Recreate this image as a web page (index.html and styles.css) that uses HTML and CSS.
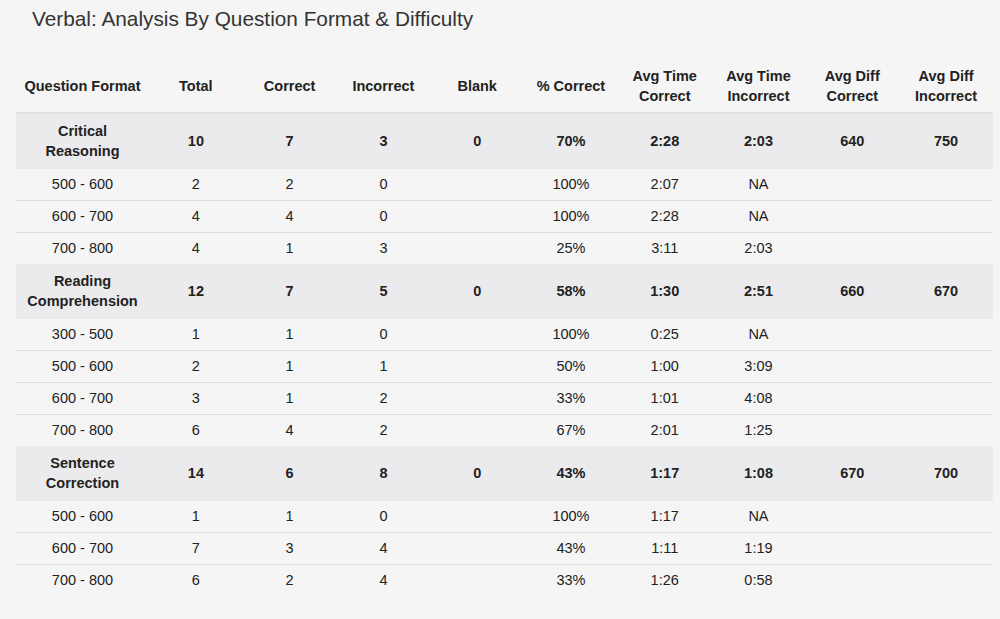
FILE: index.html
```html
<!DOCTYPE html>
<html>
<head>
<meta charset="utf-8">
<link rel="stylesheet" href="styles.css">
</head>
<body>
<div class="page">
  <h1 class="title">Verbal: Analysis By Question Format &amp; Difficulty</h1>
  <table class="stats">
    <colgroup><col class="c-first"><col><col><col><col><col><col><col><col><col></colgroup>
    <thead>
      <tr>
        <th>Question Format</th><th>Total</th><th>Correct</th><th>Incorrect</th><th>Blank</th><th>% Correct</th><th>Avg Time<br>Correct</th><th>Avg Time<br>Incorrect</th><th>Avg Diff<br>Correct</th><th>Avg Diff<br>Incorrect</th>
      </tr>
    </thead>
    <tbody>
      <tr class="group"><td>Critical<br>Reasoning</td><td>10</td><td>7</td><td>3</td><td>0</td><td>70%</td><td>2:28</td><td>2:03</td><td>640</td><td>750</td></tr>
      <tr class="sub"><td>500 - 600</td><td>2</td><td>2</td><td>0</td><td></td><td>100%</td><td>2:07</td><td>NA</td><td></td><td></td></tr>
      <tr class="sub"><td>600 - 700</td><td>4</td><td>4</td><td>0</td><td></td><td>100%</td><td>2:28</td><td>NA</td><td></td><td></td></tr>
      <tr class="sub"><td>700 - 800</td><td>4</td><td>1</td><td>3</td><td></td><td>25%</td><td>3:11</td><td>2:03</td><td></td><td></td></tr>
      <tr class="group"><td>Reading<br>Comprehension</td><td>12</td><td>7</td><td>5</td><td>0</td><td>58%</td><td>1:30</td><td>2:51</td><td>660</td><td>670</td></tr>
      <tr class="sub"><td>300 - 500</td><td>1</td><td>1</td><td>0</td><td></td><td>100%</td><td>0:25</td><td>NA</td><td></td><td></td></tr>
      <tr class="sub"><td>500 - 600</td><td>2</td><td>1</td><td>1</td><td></td><td>50%</td><td>1:00</td><td>3:09</td><td></td><td></td></tr>
      <tr class="sub"><td>600 - 700</td><td>3</td><td>1</td><td>2</td><td></td><td>33%</td><td>1:01</td><td>4:08</td><td></td><td></td></tr>
      <tr class="sub"><td>700 - 800</td><td>6</td><td>4</td><td>2</td><td></td><td>67%</td><td>2:01</td><td>1:25</td><td></td><td></td></tr>
      <tr class="group"><td>Sentence<br>Correction</td><td>14</td><td>6</td><td>8</td><td>0</td><td>43%</td><td>1:17</td><td>1:08</td><td>670</td><td>700</td></tr>
      <tr class="sub"><td>500 - 600</td><td>1</td><td>1</td><td>0</td><td></td><td>100%</td><td>1:17</td><td>NA</td><td></td><td></td></tr>
      <tr class="sub"><td>600 - 700</td><td>7</td><td>3</td><td>4</td><td></td><td>43%</td><td>1:11</td><td>1:19</td><td></td><td></td></tr>
      <tr class="sub"><td>700 - 800</td><td>6</td><td>2</td><td>4</td><td></td><td>33%</td><td>1:26</td><td>0:58</td><td></td><td></td></tr>
    </tbody>
  </table>
</div>
</body>
</html>
```

FILE: styles.css
```css
html, body {
  margin: 0;
  padding: 0;
  background: #f5f5f5;
}
body {
  font-family: "Liberation Sans", Arial, sans-serif;
  color: #222;
  font-size: 14.5px;
}
.page {
  padding: 7px 7px 0 16px;
}
.title {
  margin: 0 0 0 16px;
  font-size: 20.8px;
  line-height: 24px;
  font-weight: normal;
  color: #333;
}
.stats {
  margin-top: 35px;
  width: 977px;
  border-collapse: collapse;
  table-layout: fixed;
}
.c-first {
  width: 133px;
}
.stats th {
  font-weight: bold;
  line-height: 20px;
  padding: 0 2px 6px;
  text-align: center;
  vertical-align: middle;
  border-bottom: 2px solid #e2e2e2;
}
.stats td {
  text-align: center;
  vertical-align: middle;
  line-height: 20px;
  padding: 0 2px;
}
.group td {
  background: #ebebed;
  font-weight: bold;
  padding-top: 7px;
  padding-bottom: 8px;
}
.sub td {
  border-top: 1px solid #dcdcdc;
  padding-top: 5px;
  padding-bottom: 6px;
}
.group + .sub td {
  border-top: none;
}
```
